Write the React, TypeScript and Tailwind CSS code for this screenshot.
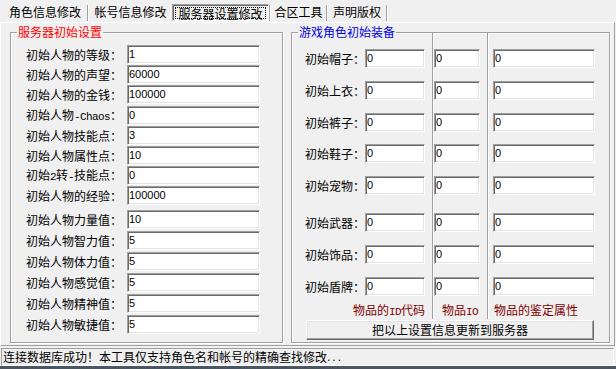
import React from "react";

const sunken =
  "bg-white border border-t-[#a0a0a0] border-l-[#a0a0a0] border-b-white border-r-white shadow-[inset_1px_1px_0_#696969,inset_-1px_-1px_0_#e3e3e3]";

function Lbl({ t }: { t: string }) {
  const parts = t.split(/([\x00-\x7f]+)/).filter((p) => p.length > 0);
  return (
    <>
      {parts.map((p, i) =>
        /^[\x00-\x7f]+$/.test(p) ? (
          <span key={i} className="font-['Liberation_Mono',monospace] text-[11px] tracking-[-0.6px]">
            {p}
          </span>
        ) : (
          <span key={i}>{p}</span>
        )
      )}
    </>
  );
}

function Field({ w, v, cls = "" }: { w: string; v: string; cls?: string }) {
  return (
    <div
      className={`${w} ${cls} h-[19px] ${sunken} flex items-center pl-[1px] font-['Liberation_Sans',sans-serif] text-[11px] text-black leading-none`}
    >
      {v}
    </div>
  );
}

function Tab({ w, t }: { w: string; t: string }) {
  return <div className={`${w} h-[18px] flex items-center justify-center leading-[18px]`}>{t}</div>;
}

function Sep() {
  return <div className="w-[2px] h-[16px] mt-[2px] border-l border-l-[#a0a0a0] border-r border-r-white" />;
}

const leftRows: { l: string; v: string; cls: string }[] = [
  { l: "初始人物的等级：", v: "1", cls: "mt-[12px]" },
  { l: "初始人物的声望：", v: "60000", cls: "mt-[1px]" },
  { l: "初始人物的金钱：", v: "100000", cls: "mt-[1px]" },
  { l: "初始人物-Chaos：", v: "0", cls: "mt-[2px]" },
  { l: "初始人物技能点：", v: "3", cls: "mt-[1px]" },
  { l: "初始人物属性点：", v: "10", cls: "mt-[1px]" },
  { l: "初始2转-技能点：", v: "0", cls: "mt-[1px]" },
  { l: "初始人物的经验：", v: "100000", cls: "mt-[1px]" },
  { l: "初始人物力量值：", v: "10", cls: "mt-[5px]" },
  { l: "初始人物智力值：", v: "5", cls: "mt-[2px]" },
  { l: "初始人物体力值：", v: "5", cls: "mt-[2px]" },
  { l: "初始人物感觉值：", v: "5", cls: "mt-[2px]" },
  { l: "初始人物精神值：", v: "5", cls: "mt-[2px]" },
  { l: "初始人物敏捷值：", v: "5", cls: "mt-[2px]" },
];

const equip: { l: string; cls: string }[] = [
  { l: "初始帽子：", cls: "mt-[16px]" },
  { l: "初始上衣：", cls: "mt-[13px]" },
  { l: "初始裤子：", cls: "mt-[13px]" },
  { l: "初始鞋子：", cls: "mt-[12px]" },
  { l: "初始宠物：", cls: "mt-[13px]" },
  { l: "初始武器：", cls: "mt-[18px]" },
  { l: "初始饰品：", cls: "mt-[13px]" },
  { l: "初始盾牌：", cls: "mt-[13px]" },
];

export default function App() {
  return (
    <div className="w-[616px] h-[369px] bg-[#f0f0f0] overflow-hidden flex flex-col font-['Noto_Sans_CJK_SC',sans-serif] text-[12px] text-black">
      {/* Tabs */}
      <div className="h-[22px] pt-[3px] pl-[3px] flex">
        <Tab w="w-[84px]" t="角色信息修改" />
        <Sep />
        <Tab w="w-[83px]" t="帐号信息修改" />
        <div className="w-[97px] h-[17px] mt-[1px] border border-t-[#a0a0a0] border-l-[#a0a0a0] border-b-white border-r-white shadow-[inset_1px_1px_0_#696969] p-[2px] pb-[1px]">
          <div className="w-full h-full border border-dotted border-black flex items-center justify-center leading-[13px]">
            服务器设置修改
          </div>
        </div>
        <Sep />
        <Tab w="w-[55px]" t="合区工具" />
        <Sep />
        <Tab w="w-[58px]" t="声明版权" />
        <Sep />
      </div>

      {/* Page */}
      <div className="h-[324px] w-[615px] border border-t-white border-l-white border-r-[#a0a0a0] border-b-[#a0a0a0] pt-[9px] pl-[9px] flex gap-[8px]">
        {/* Left group */}
        <div className="relative w-[273px] h-[311px] border border-[#a0a0a0] shadow-[inset_1px_1px_0_#fff,1px_1px_0_#fff] flex flex-col">
          <span className="absolute left-[6px] top-[-9px] px-[1px] bg-[#f0f0f0] leading-[16px] text-[#ff0000]">
            服务器初始设置
          </span>
          {leftRows.map((r, i) => (
            <div key={i} className={`${r.cls} flex items-center pl-[15px] h-[19px]`}>
              <div className="w-[101px] leading-[19px] whitespace-nowrap">
                <Lbl t={r.l} />
              </div>
              <Field w="w-[133px]" v={r.v} />
            </div>
          ))}
        </div>

        {/* Right group */}
        <div className="relative w-[319px] h-[311px] border border-[#a0a0a0] shadow-[inset_1px_1px_0_#fff,1px_1px_0_#fff] flex flex-col">
          <span className="absolute left-[6px] top-[-9px] px-[1px] bg-[#f0f0f0] leading-[16px] text-[#0000e0]">
            游戏角色初始装备
          </span>
          <div className="flex h-[286px]">
            <div className="w-[140px] flex flex-col pl-[13px]">
              {equip.map((r, i) => (
                <div key={i} className={`${r.cls} flex items-center h-[19px]`}>
                  <div className="w-[60px] leading-[19px] whitespace-nowrap">{r.l}</div>
                  <Field w="w-[60px]" v="0" />
                </div>
              ))}
              <div className="mt-[6px] h-[16px] leading-[16px] text-right pr-[7px] text-[#800000] whitespace-nowrap">
                <Lbl t="物品的ID代码" />
              </div>
            </div>
            <div className="w-[55px] flex flex-col border-l border-l-[#a0a0a0] shadow-[inset_1px_0_0_#fff]">
              {equip.map((r, i) => (
                <div key={i} className={`${r.cls} flex items-center h-[19px] pl-[1px]`}>
                  <Field w="w-[46px]" v="0" />
                </div>
              ))}
              <div className="mt-[6px] h-[16px] leading-[16px] text-center text-[#800000] whitespace-nowrap">
                <Lbl t="物品IO" />
              </div>
            </div>
            <div className="w-[122px] flex flex-col border-l border-l-[#a0a0a0] shadow-[inset_1px_0_0_#fff]">
              {equip.map((r, i) => (
                <div key={i} className={`${r.cls} flex items-center h-[19px] pl-[5px]`}>
                  <Field w="w-[102px]" v="0" />
                </div>
              ))}
              <div className="mt-[6px] h-[16px] leading-[16px] pl-[6px] text-[#800000] whitespace-nowrap">
                物品的鉴定属性
              </div>
            </div>
          </div>
          <div className="mt-[1px] ml-[14px] w-[288px] h-[20px] border border-t-white border-l-white border-b-[#696969] border-r-[#696969] shadow-[inset_-1px_-1px_0_#a0a0a0,inset_1px_1px_0_#e3e3e3] flex items-center justify-center leading-[18px]">
            把以上设置信息更新到服务器
          </div>
        </div>
      </div>

      {/* Status bar */}
      <div className="mt-[2px] ml-[1px] w-[613px] h-[18px] border border-t-[#a0a0a0] border-l-[#a0a0a0] border-b-white border-r-white pl-[1px] flex items-center leading-[16px] whitespace-nowrap">
        连接数据库成功！本工具仅支持角色名和帐号的精确查找修改
        <span className="font-['Liberation_Sans',sans-serif] tracking-[2px]">...</span>
      </div>
      <div className="h-[3px] bg-[#4b5663]" />
    </div>
  );
}
